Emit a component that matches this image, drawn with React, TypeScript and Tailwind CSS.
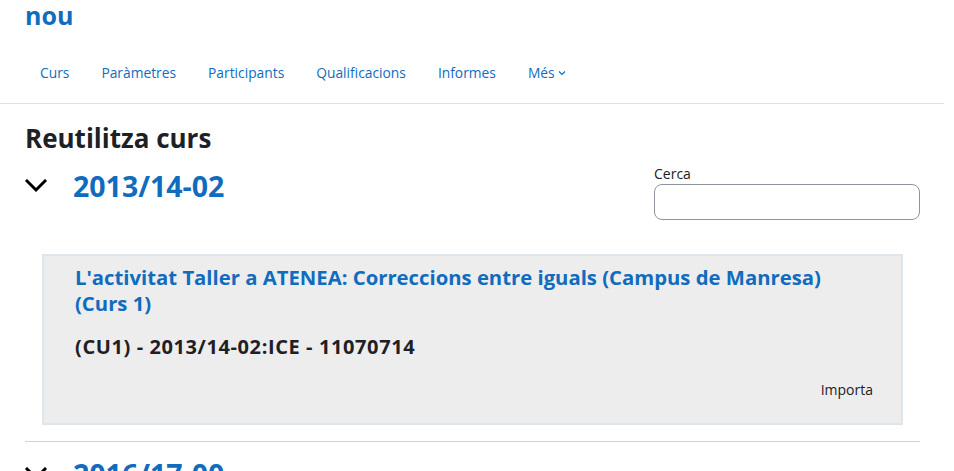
import React from 'react';

const Chevron: React.FC = () => (
    <svg width="22" height="14" viewBox="0 0 22 14" className="shrink-0">
        <path d="M2 2 L11 11 L20 2" fill="none" stroke="#000" strokeWidth="3" strokeLinecap="square" />
    </svg>
);

const navItems = ['Curs', 'Paràmetres', 'Participants', 'Qualificacions', 'Informes'];

export default function App() {
    return (
        <div className="w-[954px] h-[471px] overflow-hidden bg-white text-[#1d2125] font-['Open_Sans',sans-serif]">
            {/* Course header */}
            <div className="w-[944px]">
                <h1 className="px-[25px] text-[25px] font-bold leading-[30px] text-[#0f6cbf]">nou</h1>
                <nav className="flex items-center pl-[24px] mt-[13px] h-[61px] border-b border-[#dee2e6]">
                    {navItems.map((item) => (
                        <a key={item} className="px-4 text-[13.8px] text-[#0f6cbf] leading-[20px]">{item}</a>
                    ))}
                    <a className="px-4 text-[13.8px] text-[#0f6cbf] leading-[20px] flex items-center gap-[3px]">
                        Més
                        <svg width="8" height="6" viewBox="0 0 8 6"><path d="M1 1.5 L4 4.5 L7 1.5" fill="none" stroke="#0f6cbf" strokeWidth="1.2" /></svg>
                    </a>
                </nav>
            </div>

            {/* Main content */}
            <main className="w-[920px] pl-[25px]">
                <h2 className="mt-[19px] text-[26px] font-bold leading-[30px]">Reutilitza curs</h2>

                <div className="flex justify-between items-start mt-[11px]">
                    <div className="flex items-center gap-[26px] mt-[5px]">
                        <Chevron />
                        <span className="text-[28.5px] font-bold text-[#0f6cbf] leading-[34px]">2013/14-02</span>
                    </div>
                    <div className="w-[266px]">
                        <label className="block text-[14px] leading-[20px]">Cerca</label>
                        <input className="block w-full h-[36px] rounded-[8px] border border-[#8f959e] bg-white" />
                    </div>
                </div>

                {/* Course card */}
                <div className="mx-[17px] mt-[34px] bg-[#ededed] border-2 border-[#dee6ec] pl-[31px] pr-[28px] pt-[8px] pb-[23px]">
                    <a className="block text-[20.3px] font-bold text-[#0f6cbf] leading-[26px]">
                        L'activitat Taller a ATENEA: Correccions entre iguals (Campus de Manresa) (Curs 1)
                    </a>
                    <p className="mt-[18px] text-[20px] tracking-[0.6px] font-bold leading-[26px]">(CU1) - 2013/14-02:ICE - 11070714</p>
                    <div className="flex justify-end mt-[20px]">
                        <a className="text-[14px] leading-[20px]">Importa</a>
                    </div>
                </div>

                <hr className="mt-[16px] border-t border-[#ced4da]" />

                <div className="flex items-center gap-[26px] mt-[15px]">
                    <Chevron />
                    <span className="text-[28.5px] font-bold text-[#0f6cbf] leading-[34px]">2016/17-00</span>
                </div>
            </main>
        </div>
    );
}
